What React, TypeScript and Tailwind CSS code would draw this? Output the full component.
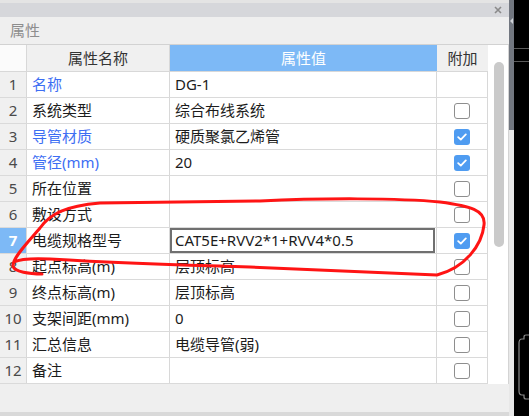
import React from 'react';

type Row = {
  name: string;
  value: string;
  blue?: boolean;
  check?: 'none' | 'on' | 'off';
  editing?: boolean;
};

const rows: Row[] = [
  { name: '名称', value: 'DG-1', blue: true, check: 'none' },
  { name: '系统类型', value: '综合布线系统', check: 'off' },
  { name: '导管材质', value: '硬质聚氯乙烯管', blue: true, check: 'on' },
  { name: '管径(mm)', value: '20', blue: true, check: 'on' },
  { name: '所在位置', value: '', check: 'off' },
  { name: '敷设方式', value: '', check: 'off' },
  { name: '电缆规格型号', value: 'CAT5E+RVV2*1+RVV4*0.5', check: 'on', editing: true },
  { name: '起点标高(m)', value: '层顶标高', check: 'off' },
  { name: '终点标高(m)', value: '层顶标高', check: 'off' },
  { name: '支架间距(mm)', value: '0', check: 'off' },
  { name: '汇总信息', value: '电缆导管(弱)', check: 'off' },
  { name: '备注', value: '', check: 'off' },
];

const Checkbox = ({ on }: { on: boolean }) =>
  on ? (
    <span className="flex h-[16px] w-[16px] items-center justify-center rounded-[3px] bg-[#4f9cf1]">
      <svg width="10" height="8" viewBox="0 0 10 8">
        <path d="M1.2 4.2 L3.8 6.6 L8.8 1.4" fill="none" stroke="#fff" strokeWidth="1.8" strokeLinecap="round" strokeLinejoin="round" />
      </svg>
    </span>
  ) : (
    <span className="h-[16px] w-[16px] rounded-[3px] border-[1.5px] border-[#8e8e8e] bg-white" />
  );

export default function App() {
  return (
    <div
      className="relative flex h-[416px] w-[529px] overflow-hidden bg-[#efefef] text-[15px] text-[#1c1c1c]"
      style={{ fontFamily: '"Noto Sans", "Noto Sans CJK SC", sans-serif' }}
    >
      {/* panel */}
      <div className="flex w-[509px] flex-col">
        <div className="h-[3px] bg-[#e4e4e4]" />
        <div className="flex h-[14px] items-center justify-end bg-[#d6d7db] pr-[7px]">
          <svg width="8" height="8" viewBox="0 0 8 8">
            <path d="M1 1 L7 7 M7 1 L1 7" stroke="#8a8a8a" strokeWidth="1.6" />
          </svg>
        </div>
        <div className="flex h-[28px] items-center border-b border-[#d2d2d2] pl-[10px] text-[15px] text-[#8d8d8d]">
          属性
        </div>

        <div className="flex border-r border-[#d4d4d4] bg-white">
          <div className="flex w-[488px] flex-col">
            {/* header */}
            <div className="flex h-[27px] border-b border-[#d8d8d8]">
              <div className="w-[27px] border-r border-[#d8d8d8] bg-[#fbfbfb]" />
              <div className="flex w-[143px] items-center justify-center border-r border-[#d8d8d8] bg-[#f0f0f0] text-[#333]">
                属性名称
              </div>
              <div className="flex w-[267px] items-center justify-center bg-[#7db9f6] text-white">属性值</div>
              <div className="flex w-[51px] items-center justify-center bg-[#f0f0f0] text-[#333]">附加</div>
            </div>
            {rows.map((r, i) => (
              <div key={i} className="flex h-[26px] border-b border-[#dadada]">
                <div
                  className={
                    r.editing
                      ? 'flex w-[27px] items-center justify-center border-r border-[#d8d8d8] bg-[#7db9f6] font-bold text-white'
                      : 'flex w-[27px] items-center justify-center border-r border-[#d8d8d8] bg-[#f0f0f0] text-[#4a4a4a]'
                  }
                >
                  {i + 1}
                </div>
                <div
                  className={
                    r.blue
                      ? 'flex w-[143px] items-center border-r border-[#d8d8d8] pl-[5px] text-[#3d6ef3]'
                      : 'flex w-[143px] items-center border-r border-[#d8d8d8] pl-[5px]'
                  }
                >
                  {r.name}
                </div>
                <div className="flex w-[267px] items-center border-r border-[#d8d8d8]">
                  {r.editing ? (
                    <div className="flex h-[25px] w-[265px] items-center border-2 border-[#707070] pl-[3px]">{r.value}</div>
                  ) : (
                    <span className="pl-[5px]">{r.value}</span>
                  )}
                </div>
                <div className="flex w-[51px] items-center justify-center border-r border-[#d8d8d8]">
                  {r.check !== 'none' && <Checkbox on={r.check === 'on'} />}
                </div>
              </div>
            ))}
          </div>
          {/* scrollbar */}
          <div className="w-[20px] pl-[6px] pt-[17px]">
            <div className="h-[185px] w-[10px] rounded-full bg-[#cacaca]" />
          </div>
        </div>

        <div className="flex-1" />
        <div className="h-[4px] bg-[#d9d9d9]" />
      </div>

      {/* splitter */}
      <div className="flex w-[5px] flex-col">
        <div className="flex h-[130px] flex-col bg-[#727780] pt-[17px]">
          <svg width="5" height="8" viewBox="0 0 5 8">
            <path d="M4 1 L1 4 L4 7 Z" fill="#d0d3d8" />
          </svg>
        </div>
        <div className="flex-1 bg-[#e8e8e8]" />
      </div>

      {/* dark area */}
      <div className="relative flex-1 bg-black">
        <div className="mt-[48px] h-px bg-[#5a5a5a]" />
        <div className="mt-[12px] h-px bg-[#5a5a5a]" />
        <svg className="absolute left-[3px] top-[334px]" width="14" height="66" viewBox="0 0 14 66">
          <path
            d="M14 1 H9 Q7 1 7 3 V5 H5 Q2 5 2 9 V57 Q2 61 5 61 H7 V63 Q7 65 9 65 H14"
            fill="none"
            stroke="#8a8a8a"
            strokeWidth="1.2"
          />
        </svg>
      </div>

      {/* hand-drawn annotation */}
      <svg className="pointer-events-none absolute left-0 top-0" width="529" height="416" viewBox="0 0 529 416">
        <path
          d="M42 274 C30 274 14 272 13 266 C12 258 30 240 40 228 C50 214 65 206 100 203 L260 201 C320 198 400 198 440 202 C470 206 486 210 484 225 C482 245 465 268 437 275 C400 274 330 270 250 267 C180 265 100 262 50 259 C30 258 18 260 14 262"
          fill="none"
          stroke="#ff1414"
          strokeWidth="3"
          strokeLinecap="round"
          strokeLinejoin="round"
        />
      </svg>
    </div>
  );
}
